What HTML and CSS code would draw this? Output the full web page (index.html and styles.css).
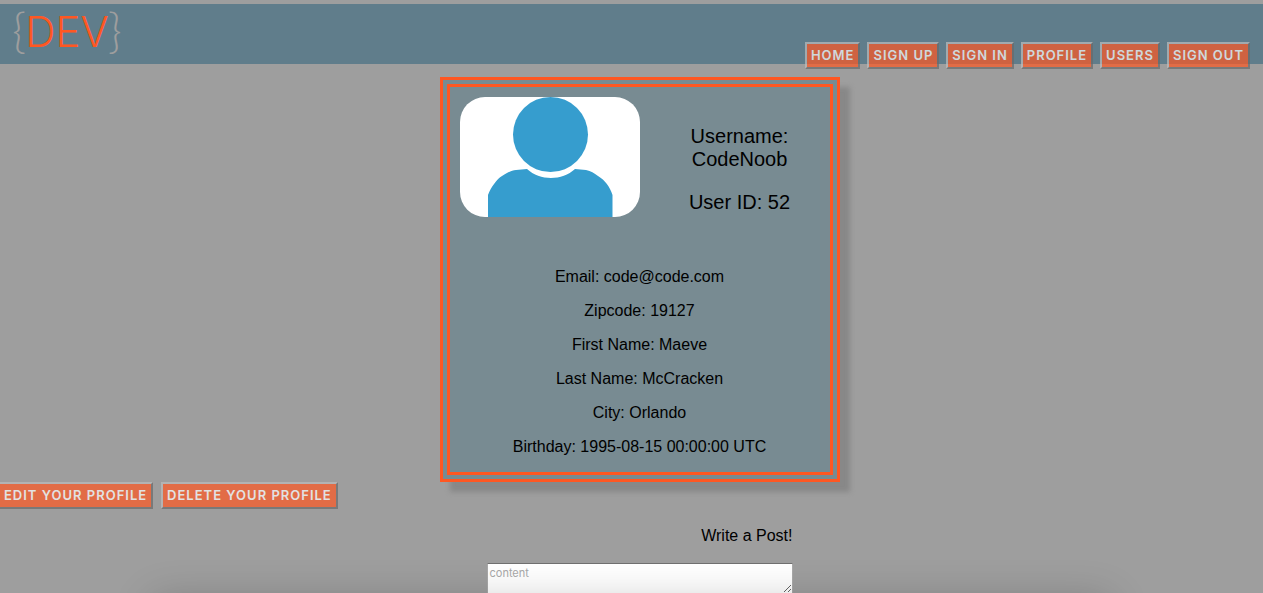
FILE: index.html
```html
<!DOCTYPE html>
<html lang="en">
<head>
<meta charset="utf-8">
<title>DEV</title>
<link rel="stylesheet" href="styles.css">
</head>
<body>
<header class="navbar">
  <a class="logo" href="#"><span class="brace">{</span><span class="word">DEV</span><span class="brace">}</span></a>
  <nav class="links">
    <a class="btn" href="#">Home</a>
    <a class="btn" href="#">Sign up</a>
    <a class="btn" href="#">Sign in</a>
    <a class="btn" href="#">Profile</a>
    <a class="btn" href="#">Users</a>
    <a class="btn" href="#">Sign out</a>
  </nav>
</header>
<main>
  <div class="column">
    <section class="card">
      <div class="summary">
        <svg class="avatar" viewBox="0 0 180 120" role="img" aria-label="User avatar">
          <rect width="180" height="120" fill="#fff"/>
          <path d="M28 120V98C31 90 37 82 42 79C49 75 52 73 56 73L67 72C80 84 102 84 115 72L126 73C131 74 134 76 138 79C145 83 150 90 152.500 98V120Z" fill="#369dce"/>
          <circle cx="90.500" cy="37.500" r="37.500" fill="#369dce"/>
        </svg>
        <div class="identity">
          <p>Username: CodeNoob</p>
          <p>User ID: 52</p>
        </div>
      </div>
      <div class="details">
        <p>Email: code@code.com</p>
        <p>Zipcode: 19127</p>
        <p>First Name: Maeve</p>
        <p>Last Name: McCracken</p>
        <p>City: Orlando</p>
        <p>Birthday: 1995-08-15 00:00:00 UTC</p>
      </div>
    </section>
  </div>
  <div class="actions">
    <button class="btn" type="button">Edit your profile</button>
    <button class="btn" type="button">Delete your profile</button>
  </div>
  <div class="column">
    <form class="post">
      <label for="content">Write a Post!</label>
      <textarea id="content" placeholder="content"></textarea>
    </form>
  </div>
</main>
<div class="shade"></div>
</body>
</html>
```
FILE: styles.css
```css
* { box-sizing: border-box; }

body {
  margin: 0;
  padding-top: 4px;
  background: #9e9e9e;
  color: #000;
  font-family: "Liberation Sans", Arial, sans-serif;
  font-size: 16px;
  line-height: 18px;
}

p { margin: 0; }

.navbar {
  display: flex;
  justify-content: space-between;
  align-items: flex-end;
  height: 60px;
  padding: 0 13px 0 12px;
  background: #607d8b;
}

.logo {
  display: flex;
  align-items: flex-start;
  align-self: flex-start;
  text-decoration: none;
}

.brace {
  color: #9e9e9e;
  font: 300 48px/52px Lato, sans-serif;
}

.word {
  margin: 0 -1px;
  color: #ff5722;
  font: 300 42px/56px Inter, sans-serif;
}

.links {
  display: flex;
  gap: 7px;
  margin-bottom: -5px;
}

.btn {
  padding: 4px;
  border: 2px solid;
  border-color: #bdbdbd #6a6a6a #6a6a6a #bdbdbd;
  background: #ff5722;
  color: #fff;
  font: 600 13px/15px Inter, sans-serif;
  letter-spacing: 1px;
  text-decoration: none;
  text-transform: uppercase;
  opacity: 0.7;
}

.column { padding-left: 16px; }

.card {
  width: 400px;
  margin: 13px auto 0;
  padding-bottom: 16px;
  border: 10px double #ff5722;
  background: #788b92;
  box-shadow: 10px 10px 5px #888;
  text-align: center;
}

.summary {
  display: flex;
  padding: 10px;
}

.avatar {
  display: block;
  flex: none;
  width: 180px;
  height: 120px;
  border-radius: 25px;
}

.identity {
  display: flex;
  flex: 1;
  flex-direction: column;
  gap: 20px;
  padding: 28px 20px 0 40px;
  font-size: 20px;
  line-height: 23px;
}

.details {
  display: flex;
  flex-direction: column;
  gap: 16px;
  padding-top: 41px;
}

.actions {
  display: flex;
  gap: 8px;
  margin-left: -2px;
}

.post {
  display: flex;
  flex-direction: column;
  align-items: flex-end;
  gap: 18px;
  width: 306px;
  margin: 18px auto 0;
}

.post textarea {
  width: 100%;
  height: 30px;
  padding: 2px;
  border: 1px solid #a9a9a9;
  border-top-color: #707070;
  border-bottom: 0;
  background: #fff;
  font: 11px/15px Inter, "Liberation Sans", sans-serif;
}

.post textarea::placeholder { color: #a9a9a9; }

/* Soft shadow rising from the bottom edge of the window */
.shade {
  position: fixed;
  top: 100%;
  left: 12%;
  right: 12%;
  height: 60px;
  box-shadow: 0 6px 40px rgba(0, 0, 0, 0.2);
  pointer-events: none;
}
```
